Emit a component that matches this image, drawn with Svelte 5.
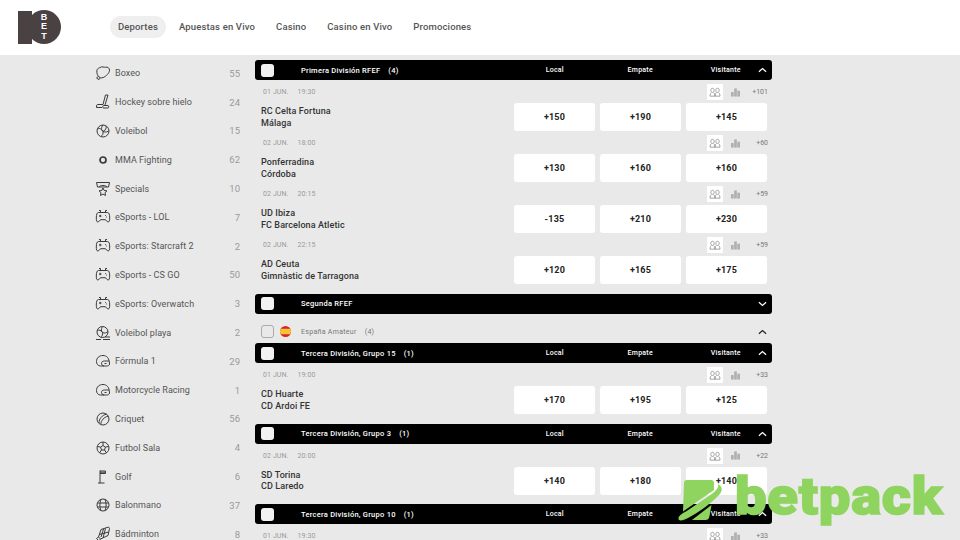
<script>
  const nav = ['Deportes', 'Apuestas en Vivo', 'Casino', 'Casino en Vivo', 'Promociones'];

  const icons = {
    glove: ['M5 2.500C7 1 9 2.600 10.500 2.200c2-.5 4 .6 4 3 0 3-3.600 6.200-6.400 7.400-2 .8-4-.2-5-1.600C1.800 9.200 1.500 6 2.200 4.500 2.800 3.300 4 3.200 5 2.500Z', 'M2.800 11.500 1.700 13.200 4 14.600 5.200 13'],
    hockey: ['M13 1H10.500L8 10.500H2.800C1.800 10.500 1.500 11 1.500 13.500H7', 'M13 1 10 11', 'M8.500 11.500h4.500c1 0 1 2.500 0 2.500H8.500c-1 0-1-2.500 0-2.500Z'],
    volley: ['M8 2a6 6 0 1 0 0 12A6 6 0 0 0 8 2Z', 'M8 2C6 4.500 6 7 8 8.500c2.500 1 5 .5 6-1', 'M2.400 6C4.500 5 6.500 5.500 8 8.500c.5 2-.5 4-2 5', 'M11 3c.5 2 0 4-3 5.500'],
    spec: ['M1.500 1.500h13l-1 4.500H2.500Z', 'M4 6c1-2 7-2 8 0', 'M8 7 9.200 9.500 12 9.800 10 11.700 10.500 14.500 8 13.100 5.500 14.500 6 11.700 4 9.800 6.800 9.500Z'],
    pad: ['M3.500 3.500h9c1.500 0 2.200 2 2.200 5.500 0 2.500-.5 4-1.500 4-1.500 0-1.700-2.300-3.200-2.300H6c-1.500 0-1.700 2.300-3.200 2.300-1 0-1.500-1.500-1.500-4 0-3.500.7-5.500 2.200-5.500Z', 'M5.500 3.500V1.500H4M10.500 3.500V1.500H12', 'M4 7h2.500M5.200 5.800v2.400', 'M10 6.500h.8M11.200 8h.8'],
    beach: ['M7.500 1.500a5.500 5.500 0 1 0 0 11 5.500 5.500 0 0 0 0-11Z', 'M7.500 1.500C6 4 6 6 7.500 7.500c2 1 4 .5 5.500-1', 'M2.200 5.500C4 4.700 6 5 7.500 7.500c.3 2-.3 3.500-1.500 5', 'M8 14.500h7M10 12h5M1 14.500h5'],
    helmet: ['M14.500 11C14.500 5 11.500 2.500 8 2.500 4 2.500 1.500 5 1.500 8.500c0 2.500 1.500 4.500 4 4.500h6c1.500 0 3-.5 3-2Z', 'M14 8H9.500C7.500 8 6.500 9 6.500 10.300 6.500 11.500 7.500 13 9 13', 'M9.500 10.500h2'],
    cricket: ['M8 2a6 6 0 1 0 0 12A6 6 0 0 0 8 2Z', 'M4 12C4 8 7 4 11.500 3.200', 'M5.800 13.300C6 9.500 9 6 13.300 5.200'],
    foot: ['M8 2a6 6 0 1 0 0 12A6 6 0 0 0 8 2Z', 'M8 5.500 10.400 7.200 9.500 10H6.500L5.600 7.200Z', 'M8 2v3.500M10.400 7.200 13.800 6.300M9.500 10l2 3M6.500 10l-2 3M5.600 7.200 2.200 6.300'],
    golf: ['M5 14V1.500', 'M5 2h5.500v2.500H5', 'M3 14h6.500', 'M5 3.200h5'],
    hand: ['M8 2a6 6 0 1 0 0 12A6 6 0 0 0 8 2Z', 'M2.500 6h11M2.500 10h11M6 2.300c-1.500 3.500-1.500 8 0 11.400M10 2.300c1.500 3.500 1.500 8 0 11.400'],
    bad: ['M4 15 1.500 12.500l2-1.500 2 2Z', 'M3.500 11 6 3.500 13.500 1 14.500 2.500 13 9.500 5.500 13', 'M6 11l2.500-8M8 12l2.500-9.500M4.500 8.500l9-2.500']
  };

  const sports = [
    ['Boxeo', 55, 'glove'], ['Hockey sobre hielo', 24, 'hockey'], ['Voleibol', 15, 'volley'],
    ['MMA Fighting', 62, 'mma'], ['Specials', 10, 'spec'], ['eSports - LOL', 7, 'pad'],
    ['eSports: Starcraft 2', 2, 'pad'], ['eSports - CS GO', 50, 'pad'], ['eSports: Overwatch', 3, 'pad'],
    ['Voleibol playa', 2, 'beach'], ['Fórmula 1', 29, 'helmet'], ['Motorcycle Racing', 1, 'helmet'],
    ['Criquet', 56, 'cricket'], ['Futbol Sala', 4, 'foot'], ['Golf', 6, 'golf'],
    ['Balonmano', 37, 'hand'], ['Bádminton', 8, 'bad']
  ];

  const first = [
    { date: '01 JUN.', time: '19:30', home: 'RC Celta Fortuna', away: 'Málaga', odds: ['+150', '+190', '+145'], more: '+101' },
    { date: '02 JUN.', time: '18:00', home: 'Ponferradina', away: 'Córdoba', odds: ['+130', '+160', '+160'], more: '+60' },
    { date: '02 JUN.', time: '20:15', home: 'UD Ibiza', away: 'FC Barcelona Atletic', odds: ['-135', '+210', '+230'], more: '+59' },
    { date: '02 JUN.', time: '22:15', home: 'AD Ceuta', away: 'Gimnàstic de Tarragona', odds: ['+120', '+165', '+175'], more: '+59' }
  ];
  const grupo15 = [{ date: '01 JUN.', time: '19:00', home: 'CD Huarte', away: 'CD Ardoi FE', odds: ['+170', '+195', '+125'], more: '+33' }];
  const grupo3 = [{ date: '02 JUN.', time: '20:00', home: 'SD Torina', away: 'CD Laredo', odds: ['+140', '+180', '+140'], more: '+22' }];
  const grupo10 = [{ date: '01 JUN.', time: '19:30', home: '', away: '', odds: ['', '', ''], more: '+33' }];
</script>

{#snippet groupHead(title, count, open)}
  <div class="ghead">
    <span class="check"></span>
    <span class="gtitle">{title}{#if count}<span class="gcount">{count}</span>{/if}</span>
    {#if open}
      <span class="col">Local</span><span class="col">Empate</span><span class="col">Visitante</span>
    {/if}
    <svg class="chev" viewBox="0 0 10 6"><path d={open ? 'M1 5 5 1.500 9 5' : 'M1 1 5 4.500 9 1'} /></svg>
  </div>
{/snippet}

{#snippet match(m)}
  <div class="match">
    <div class="meta">
      <span class="date">{m.date}</span><span class="date">{m.time}</span>
      <span class="people">
        <svg viewBox="0 0 14 12"><path d="M4 1.500c1.500 0 2 1.200 2 2.500s-.5 2.500-2 2.500S2 5.300 2 4s.5-2.500 2-2.500ZM1 11c0-2 .5-3.500 1.500-4M7 11c0-2-.5-3.500-1.500-4M10 1.500c1.500 0 2 1.200 2 2.500s-.5 2.500-2 2.500S8 5.300 8 4s.5-2.500 2-2.500ZM7 11c0-2 .5-3.500 1.500-4M13 11c0-2-.5-3.500-1.500-4M1 11h12" /></svg>
      </span>
      <svg class="bars" viewBox="0 0 10 9"><rect x="0" y="4" width="3" height="5" /><rect x="3.500" y="0" width="3" height="9" /><rect x="7" y="2.500" width="3" height="6.500" /></svg>
      <span class="more">{m.more}</span>
    </div>
    <div class="line">
      <div class="teams"><div>{m.home}</div><div>{m.away}</div></div>
      {#each m.odds as o}
        <div class="odd">{o}</div>
      {/each}
    </div>
  </div>
{/snippet}

<div class="page">
  <header>
    <div class="logo">
      <span class="bar"></span>
      <span class="disc"><span>B</span><span>E</span><span>T</span></span>
    </div>
    <nav>
      {#each nav as item, i}
        <span class="nav-item" class:active={i === 0}>{item}</span>
      {/each}
    </nav>
  </header>

  <div class="body">
    <aside>
      {#each sports as s}
        <div class="sport">
          <span class="ic">
            <svg viewBox="0 0 16 16">
              {#if s[2] === 'mma'}
                <circle cx="8" cy="8" r="3" class="thick" />
              {:else}
                {#each icons[s[2]] as d}<path {d} />{/each}
              {/if}
            </svg>
          </span>
          <span class="name">{s[0]}</span>
          <span class="num">{s[1]}</span>
        </div>
      {/each}
    </aside>

    <main>
      <section>
        {@render groupHead('Primera División RFEF', '(4)', true)}
        {#each first as m}{@render match(m)}{/each}
      </section>
      <section>
        {@render groupHead('Segunda RFEF', '', false)}
      </section>
      <div class="country">
        <span class="check light"></span>
        <svg class="flag" viewBox="0 0 12 12">
          <clipPath id="fl"><circle cx="6" cy="6" r="6" /></clipPath>
          <g clip-path="url(#fl)"><rect width="12" height="12" fill="#d8232a" /><rect y="3" width="12" height="6" fill="#f7c331" /></g>
        </svg>
        <span class="cname">España Amateur</span><span class="ccount">(4)</span>
        <svg class="chev dark" viewBox="0 0 10 6"><path d="M1 5 5 1.500 9 5" /></svg>
      </div>
      <section>
        {@render groupHead('Tercera División, Grupo 15', '(1)', true)}
        {#each grupo15 as m}{@render match(m)}{/each}
      </section>
      <section>
        {@render groupHead('Tercera División, Grupo 3', '(1)', true)}
        {#each grupo3 as m}{@render match(m)}{/each}
      </section>
      <section>
        {@render groupHead('Tercera División, Grupo 10', '(1)', true)}
        {#each grupo10 as m}{@render match(m)}{/each}
      </section>
    </main>
  </div>

  <div class="wm">
    <svg viewBox="0 0 46 45" class="wm-ic">
      <path d="M9 2H33c2 0 3 1 3 3V12L5 33.500 6 5C6 3 7 2 9 2Z" />
      <path d="M14 42 33.500 27 31.500 38C31 41 29.500 42 27.500 42Z" />
      <path d="M1 42C-1 39 3 36 8 33.500L33 16.500C39 12 41 9 40 6 45 9 45 13 40 18 30 28 18 36 10 40 6 42 3 43 1 42Z" />
    </svg>
    <span class="wm-text">betpack</span>
  </div>
</div>

<style>
  :global(body) {
    background: #e9e9e9;
    overflow: hidden;
  }

  .page {
    position: relative;
    height: 540px;
    overflow: hidden;
    background: #e9e9e9;
    font-family: Roboto, "Open Sans", sans-serif;
    color: #333;
  }

  header {
    height: 55px;
    background: #fff;
    display: flex;
    align-items: center;
    padding-left: 18px;
  }

  .logo {
    display: flex;
    align-items: center;
    width: 92px;
    height: 34px;
    margin-top: -1px;
  }
  .bar {
    width: 14px;
    height: 33px;
    background: #4a4143;
  }
  .disc {
    width: 34px;
    height: 34px;
    margin-left: -5px;
    border-radius: 50%;
    background: #4a4143;
    display: flex;
    flex-direction: column;
    align-items: center;
    justify-content: center;
    color: #fff;
    font: 700 9px/9.500px "Liberation Sans", sans-serif;
  }

  nav {
    display: flex;
    gap: 5px;
    margin-top: -1px;
  }
  .nav-item {
    padding: 0 8px;
    height: 22px;
    line-height: 22px;
    border-radius: 11px;
    font-size: 9.500px;
    font-weight: 500;
    letter-spacing: 0.15px;
    color: #555;
    white-space: nowrap;
  }
  .nav-item.active {
    background: #efefef;
  }

  .body {
    display: flex;
    gap: 15px;
    padding-left: 95px;
  }

  aside {
    width: 145px;
    padding-top: 4px;
  }
  .sport {
    height: 28.800px;
    display: flex;
    align-items: center;
    font-size: 9px;
    color: #555;
  }
  .ic {
    width: 20px;
    height: 16px;
    display: flex;
  }
  .ic svg {
    width: 16px;
    height: 16px;
  }
  .ic path, .ic circle {
    fill: none;
    stroke: #3a3a3a;
    stroke-width: 1;
  }
  .ic .thick {
    stroke-width: 1.700;
  }
  .name {
    flex: 1;
    letter-spacing: 0.05px;
  }
  .num {
    color: #999;
    font-size: 9.500px;
  }

  main {
    width: 517px;
    padding-top: 5px;
  }
  section {
    margin-bottom: 9.500px;
  }

  .ghead {
    height: 20px;
    background: #000;
    border-radius: 3px;
    display: flex;
    align-items: center;
    color: #fff;
    font-size: 7.500px;
    font-weight: 500;
    letter-spacing: 0.25px;
  }
  .check {
    width: 13px;
    height: 13px;
    margin-left: 6px;
    border-radius: 3px;
    background: #f1f1f1;
    flex: none;
  }
  .check.light {
    background: transparent;
    border: 1px solid #aaa;
    box-sizing: border-box;
  }
  .gtitle {
    margin-left: 27px;
    width: 211px;
    flex: none;
    white-space: nowrap;
  }
  .gcount {
    margin-left: 8px;
  }
  .col {
    width: 85.500px;
    flex: none;
    text-align: center;
    font-size: 7px;
  }
  .chev {
    position: absolute;
    left: 758px;
    width: 9px;
    height: 6px;
  }
  .chev path {
    fill: none;
    stroke: #fff;
    stroke-width: 1.400;
  }
  .chev.dark path {
    stroke: #222;
  }

  .match {
    height: 51px;
    padding-top: 2px;
    box-sizing: border-box;
  }
  .meta {
    height: 20px;
    display: flex;
    align-items: center;
    padding-left: 8px;
  }
  .date {
    font-size: 7px;
    color: #9a9a9a;
    margin-right: 9px;
    letter-spacing: 0.1px;
  }
  .people {
    margin-left: auto;
    width: 16px;
    height: 16px;
    background: #fff;
    display: flex;
    align-items: center;
    justify-content: center;
  }
  .people svg {
    width: 12px;
    height: 10px;
  }
  .people path {
    fill: none;
    stroke: #777;
    stroke-width: 0.800;
  }
  .bars {
    width: 9px;
    height: 9px;
    margin-left: 8px;
    fill: #b0b0b0;
  }
  .more {
    width: 28px;
    text-align: right;
    font-size: 7px;
    color: #777;
    margin-right: 4px;
  }

  .line {
    display: flex;
    gap: 5px;
    padding-right: 5px;
    margin-top: 1px;
  }
  .teams {
    flex: 1;
    padding-left: 6px;
    padding-top: 1px;
    font-size: 9px;
    line-height: 11.500px;
    font-weight: 500;
    letter-spacing: 0.1px;
    color: #333;
    align-self: center;
  }
  .odd {
    width: 81px;
    height: 28px;
    background: #fff;
    border-radius: 3px;
    text-align: center;
    line-height: 28px;
    font-size: 9px;
    font-weight: 700;
    color: #222;
    letter-spacing: 0.2px;
  }

  .country {
    height: 21px;
    margin-top: -2px;
    margin-bottom: 1px;
    display: flex;
    align-items: center;
    font-size: 7px;
    color: #777;
    letter-spacing: 0.3px;
  }
  .flag {
    width: 11px;
    height: 11px;
    margin-left: 6px;
    flex: none;
  }
  .cname {
    margin-left: 10px;
  }
  .ccount {
    margin-left: 8px;
  }

  .wm {
    position: absolute;
    left: 678px;
    top: 478px;
    display: flex;
    align-items: flex-start;
    color: #8fd45f;
  }
  .wm-ic {
    width: 46px;
    height: 45px;
    fill: #8fd45f;
  }
  .wm-text {
    margin-left: 11px;
    margin-top: -7px;
    font: 900 52px/52px Roboto, sans-serif;
    letter-spacing: 0.7px;
    -webkit-text-stroke: 1.500px #8fd45f;
    transform: scaleX(1.08);
    transform-origin: left center;
  }
</style>
